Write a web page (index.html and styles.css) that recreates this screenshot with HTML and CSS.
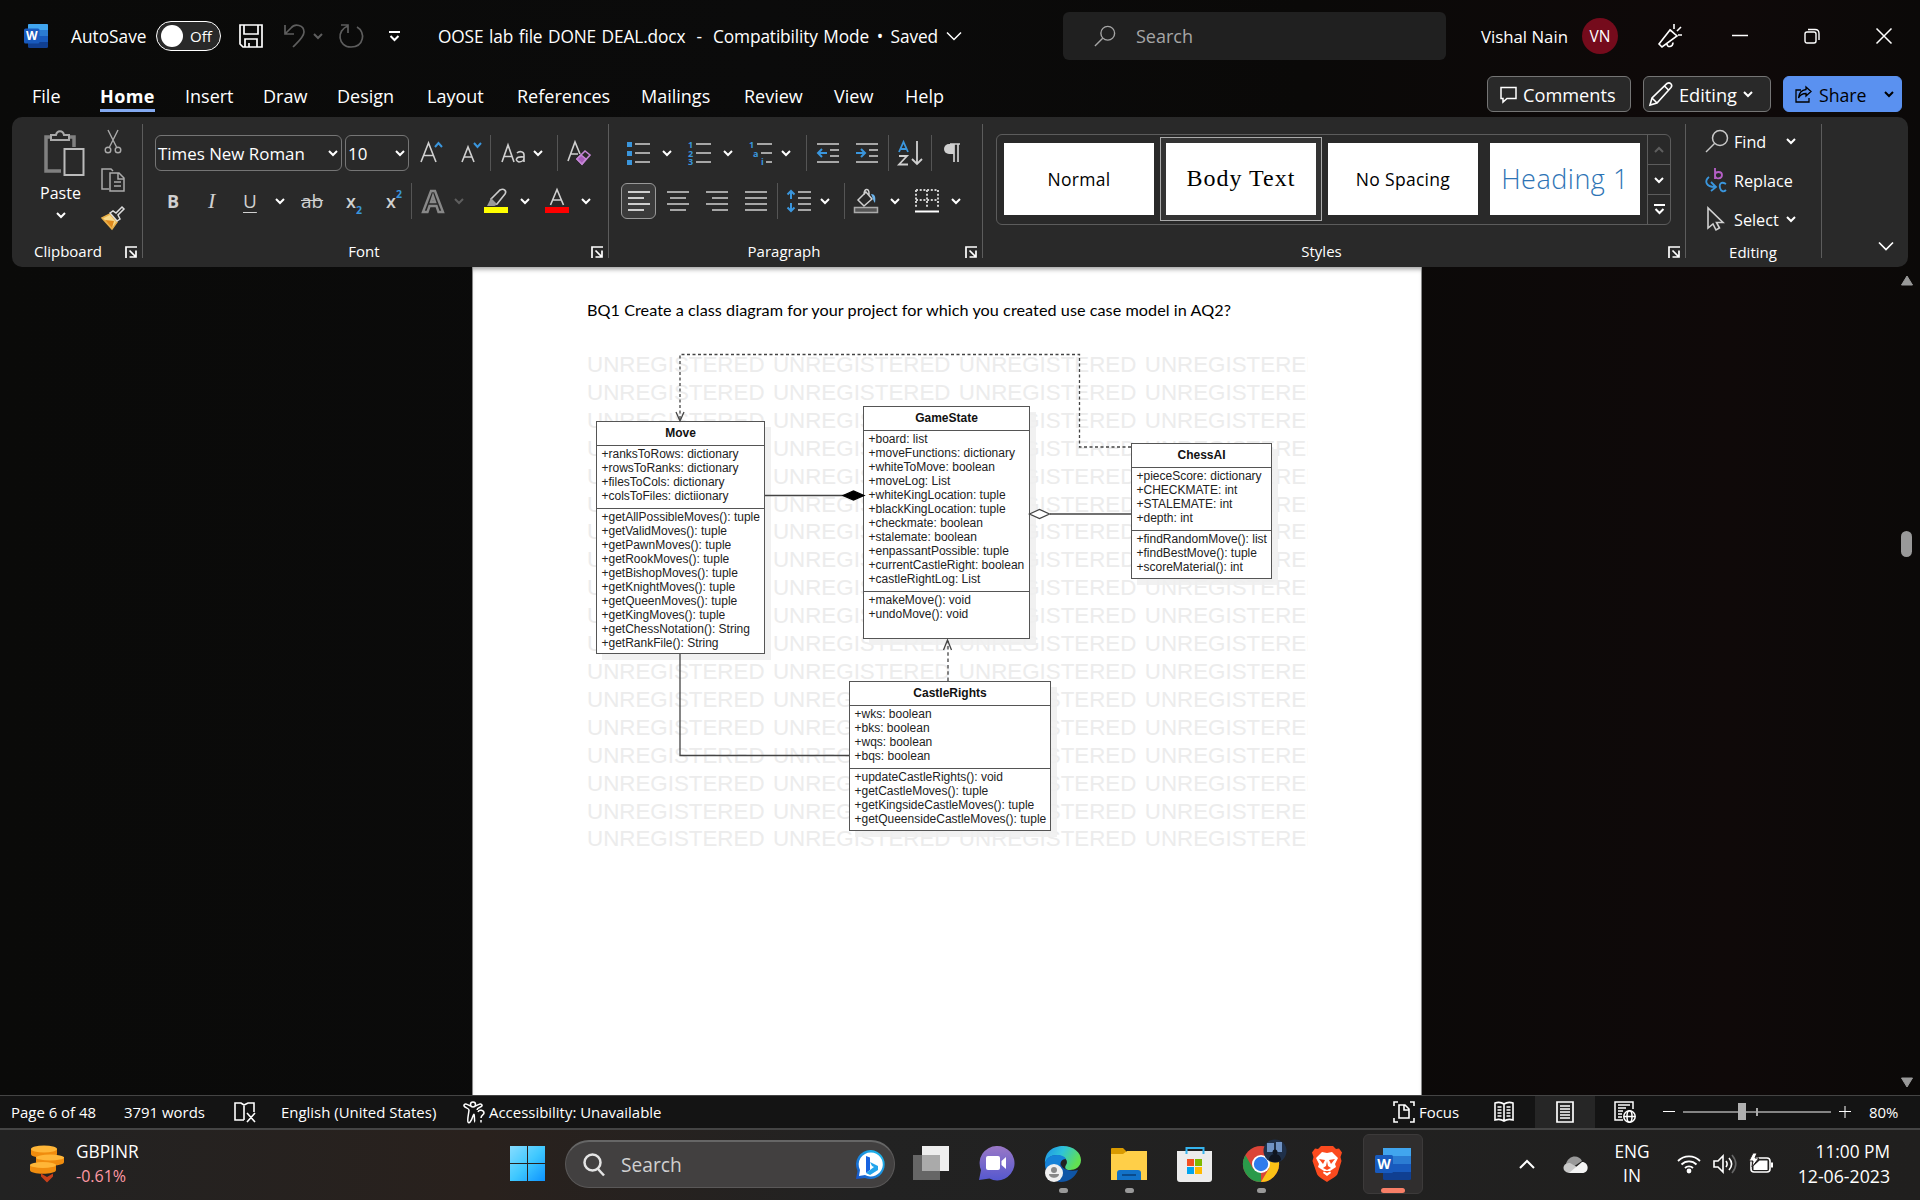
FILE: index.html
```
<!DOCTYPE html>
<html lang="en">
<head>
<meta charset="utf-8">
<title>OOSE lab file DONE DEAL.docx - Word</title>
<link rel="stylesheet" href="styles.css">
</head>
<body>
<svg class="defs" width="0" height="0" aria-hidden="true">
  <defs>
    <symbol id="chev" viewBox="0 0 10 10"><path d="M1 3l4 4 4-4" fill="none" stroke="currentColor" stroke-width="2"/></symbol>
    <symbol id="launch" viewBox="0 0 12 12"><path d="M1 12V1h11M4.500 4.500l6 6M11 4.500V11H4.500" fill="none" stroke="currentColor" stroke-width="1.700"/></symbol>
    <symbol id="word" viewBox="0 0 36 36"><rect x="8" y="2" width="28" height="32" rx="1.500" fill="#103f91"/><path d="M8 2h28v8H8z" fill="#41a5ee"/><path d="M8 10h28v8H8z" fill="#2b7cd3"/><path d="M8 18h28v8H8z" fill="#185abd"/><rect x="0" y="9" width="18" height="18" rx="1.500" fill="#185abd"/><text x="9" y="23" text-anchor="middle" font-family="Open Sans, sans-serif" font-weight="700" font-size="14" fill="#fff">W</text></symbol>
    <symbol id="word-title" viewBox="0 0 24 24"><rect x="4" width="20" height="24" rx="1.500" fill="#103f91"/><path d="M4 1q0-1 1-1h18q1 0 1 1v5H4z" fill="#41a5ee"/><path d="M4 6h20v6H4z" fill="#2b7cd3"/><path d="M4 12h20v6H4z" fill="#185abd"/><rect y="4.500" width="15.500" height="15" rx="1.500" fill="#185abd"/><text x="7.700" y="16.300" text-anchor="middle" font-family="Open Sans, sans-serif" font-weight="700" font-size="12" fill="#fff">W</text></symbol>
    <symbol id="glass" viewBox="0 0 24 24"><circle cx="15" cy="9" r="7.500" fill="none" stroke="currentColor" stroke-width="1.500"/><path d="M9.500 14.500L1 23" stroke="currentColor" stroke-width="1.500"/></symbol>
  </defs>
</svg>

<header class="titlebar">
  <svg class="i24"><use href="#word-title"/></svg>
  <span class="t17">AutoSave</span>
  <span class="toggle"><i></i>Off</span>
  <svg class="i24" viewBox="0 0 24 24" fill="none" stroke="#fff" stroke-width="1.700"><path d="M1 1h22v22H4l-3-3zM5 1v9h14V1M6 23v-8h12v8M10 23v-4"/></svg>
  <svg class="i24 dim" viewBox="0 0 24 24" fill="none" stroke="currentColor" stroke-width="1.700"><path d="M2 1v9h9M2 10l6-6c4-5 13-3 13 4 0 5-6 10-11 15"/></svg>
  <svg class="chev dim"><use href="#chev"/></svg>
  <svg class="i24 dim" viewBox="0 0 24 24" fill="none" stroke="currentColor" stroke-width="1.700"><path d="M2 1h7v8M9 2C-3 6-1 23 12 23s15-15 6-20"/></svg>
  <svg class="qat" viewBox="0 0 11 11"><path d="M0 1h11M1.500 5l4 4 4-4" fill="none" stroke="#fff" stroke-width="2"/></svg>
  <span class="t17 doc-name">OOSE lab file DONE DEAL.docx&nbsp; -&nbsp; Compatibility Mode <b>•</b> Saved</span>
  <svg class="chev16" viewBox="0 0 16 16"><path d="M1 4.500l7 7 7-7" fill="none" stroke="#fff" stroke-width="1.500"/></svg>
  <div class="search"><svg class="i22"><use href="#glass"/></svg><span>Search</span></div>
  <span class="t17 user">Vishal Nain</span>
  <span class="avatar">VN</span>
  <svg class="i24" viewBox="0 0 24 24" fill="none" stroke="#fff" stroke-width="1.600"><path d="M1 20L12 6l7 6L4 23zM12 5.500l7.500 7M9 20c0 4 6 3 6-1.500M16 5V0M19 7l4-4M20 11h4"/></svg>
  <svg class="i16" viewBox="0 0 16 16"><path d="M0 7.500h16" stroke="#fff" stroke-width="1.500"/></svg>
  <svg class="i16" viewBox="0 0 16 16" fill="none" stroke="#fff" stroke-width="1.400"><rect x="1" y="4" width="11" height="11" rx="2"/><path d="M4 1.500h7c2.500 0 4 1.500 4 4V12"/></svg>
  <svg class="i16" viewBox="0 0 16 16"><path d="M0.500 0.500l15 15M15.500 0.500l-15 15" stroke="#fff" stroke-width="1.500"/></svg>
</header>

<nav class="tabs">
  <div class="tab-list">
    <span>File</span><span class="on">Home</span><span>Insert</span><span>Draw</span><span>Design</span><span>Layout</span><span>References</span><span>Mailings</span><span>Review</span><span>View</span><span>Help</span>
  </div>
  <div class="actions">
    <div class="btn comments"><svg class="i17" viewBox="0 0 17 17"><path d="M1 1.500h15v11H7l-4 3.500v-3.500H1z" fill="none" stroke="#fff" stroke-width="1.500"/></svg><span>Comments</span></div>
    <div class="btn editing"><svg class="i24" viewBox="0 0 24 24"><path d="M1 23l2-7L18 1.500c3-2 6 1.500 4 4L8 21zM15.500 4l4.500 4.500M3 16l5 5" fill="none" stroke="#fff" stroke-width="1.600"/></svg><span>Editing</span><svg class="chev"><use href="#chev"/></svg></div>
    <div class="btn share"><svg class="i17" viewBox="0 0 17 17"><path d="M6 4H1v12h13v-4M11 1l5 4.500-5 4.500V7.500C7 7.500 5 9 3.500 12 4 7 7 4 11 3.500z" fill="none" stroke="#000" stroke-width="1.300"/></svg><span>Share</span><svg class="chev"><use href="#chev"/></svg></div>
  </div>
</nav>

<section class="ribbon">
  <div class="group clipboard">
    <div class="clip-body">
      <div class="paste">
        <svg width="42" height="46" viewBox="0 0 42 46" fill="none" stroke="#999" stroke-width="2"><path d="M8 7H3v34h15M26 7h5v10" stroke-width="3.500" stroke="#808080"/><path d="M8 10V5h5c1-5 7-5 8 0h5v5z" stroke="#aaa" fill="#292929"/><path d="M21.500 19h19v26h-19z" stroke="#bbb" fill="#292929"/></svg>
        <span>Paste</span><svg class="chev"><use href="#chev"/></svg>
      </div>
      <div class="clip-icons">
        <svg class="i24" viewBox="0 0 24 24" fill="none" stroke="#aaa" stroke-width="1.400"><path d="M7 0l8.500 17M17 0L8.500 17"/><circle cx="7" cy="20" r="2.800"/><circle cx="17" cy="20" r="2.800"/></svg>
        <svg class="i24" viewBox="0 0 24 24" fill="none" stroke="#aaa" stroke-width="1.500"><path d="M8 21H1V1h9l2 2M9 5h9l5 5v13H9zM17 5v6h6M13 14h7M13 18h7"/></svg>
        <svg class="i24" viewBox="0 0 24 24" fill="none" stroke-width="1.500"><path d="M1 12l8-4 7 8-5 7z" fill="#f7d98a" stroke="#e8b04a"/><path d="M4 14l9 1-2 7z" fill="#e08a1c"/><path d="M9 7l3-2 3 2 6-6 2 2-6 6 2 4-3 2z" fill="#292929" stroke="#ddd"/></svg>
      </div>
    </div>
    <footer><span>Clipboard</span><svg class="launch"><use href="#launch"/></svg></footer>
  </div>

  <div class="group font">
    <div class="row font-top">
      <div class="combo">Times New Roman<svg class="chev"><use href="#chev"/></svg></div>
      <div class="combo">10<svg class="chev"><use href="#chev"/></svg></div>
      <svg width="24" height="24" viewBox="0 0 24 24" fill="none" stroke="#d0d0d0" stroke-width="1.600"><path d="M1 21L8.500 2 16 21M3.500 14.500h10"/><path d="M15 6l3.500-4L22 6" stroke="#3a96dd" stroke-width="2"/></svg>
      <svg width="24" height="24" viewBox="0 0 24 24" fill="none" stroke="#d0d0d0" stroke-width="1.600"><path d="M1 21L7 6l6 15M3 16h8"/><path d="M13 2l3.500 4L20 2" stroke="#3a96dd" stroke-width="2"/></svg>
      <b class="sep"></b>
      <svg width="26" height="24" viewBox="0 0 26 24" fill="none" stroke="#d0d0d0" stroke-width="1.600"><path d="M1 21L7 4l6 17M3 15.500h8M16 12c2-2 7-2 7 2v7m0-5c-9-1-9 4-5 5 3 0 5-2 5-4"/></svg>
      <svg class="chev"><use href="#chev"/></svg>
      <b class="sep"></b>
      <svg width="24" height="24" viewBox="0 0 24 24" fill="none" stroke="#d0d0d0" stroke-width="1.600"><path d="M1 20L8 1l5 12M3 13h8"/><path d="M10 18l8-8 5 4-8 9z" stroke="#c586d6"/><path d="M10 18l4-4 5 4-4 5z" fill="#a85cba" stroke="#c586d6"/></svg>
    </div>
    <div class="row font-bottom">
      <span class="g-b">B</span><span class="g-i">I</span><span class="g-u">U</span>
      <svg class="chev"><use href="#chev"/></svg>
      <span class="g-s">ab</span>
      <span class="g-x">x<sub>2</sub></span><span class="g-x">x<sup>2</sup></span>
      <b class="sep"></b>
      <svg class="i24" viewBox="0 0 24 24"><path d="M2 23L10 2h4l8 21h-4.500l-2-6h-7l-2 6zM10 13h4l-2-6z" fill="#292929" stroke="#888" stroke-width="2.400"/></svg>
      <svg class="chev dim"><use href="#chev"/></svg>
      <svg class="i24" viewBox="0 0 24 24"><path d="M7 10l9-9c4-2 7 1 5 4l-8 10-4 1z" fill="none" stroke="#ccc" stroke-width="1.600"/><path d="M7 9l6 6-3 2H3z" fill="#999"/><path d="M0 18h24v6H0z" fill="#ff0"/></svg>
      <svg class="chev"><use href="#chev"/></svg>
      <svg class="i24" viewBox="0 0 24 24"><path d="M5.500 16L12 0.500 18.500 16M8 11h8" fill="none" stroke="#d0d0d0" stroke-width="1.600"/><path d="M0 18h24v6H0z" fill="red"/></svg>
      <svg class="chev"><use href="#chev"/></svg>
    </div>
    <footer><span>Font</span><svg class="launch"><use href="#launch"/></svg></footer>
  </div>

  <div class="group para">
    <div class="row para-top">
      <svg class="i24" viewBox="0 0 24 24"><path d="M0 1h5v5H0zM0 10h5v5H0zM0 19h5v5H0z" fill="#3a96dd"/><path d="M8 3h15M8 12h15M8 21h15" stroke="#d0d0d0" stroke-width="1.700"/></svg>
      <svg class="chev"><use href="#chev"/></svg>
      <svg class="i24" viewBox="0 0 24 24"><g font-family="Open Sans, sans-serif" font-size="9" font-weight="700" fill="#3a96dd"><text x="0" y="7">1</text><text x="0" y="15.500">2</text><text x="0" y="24">3</text></g><path d="M8 3h15M8 12h15M8 21h15" stroke="#d0d0d0" stroke-width="1.700"/></svg>
      <svg class="chev"><use href="#chev"/></svg>
      <svg class="i24" viewBox="0 0 24 24"><g font-family="Open Sans, sans-serif" font-size="9" font-weight="700" fill="#3a96dd"><text x="0" y="7">1</text><text x="4" y="15.500">a</text><text x="12" y="24">i</text></g><path d="M8 3h15M12 12h11M17 21h6" stroke="#d0d0d0" stroke-width="1.700"/></svg>
      <svg class="chev"><use href="#chev"/></svg>
      <b class="sep"></b>
      <svg class="i24" viewBox="0 0 24 24" fill="none" stroke="#d0d0d0" stroke-width="1.700"><path d="M0 3h22M13 9h9M13 15h9M0 21h22"/><path d="M1 12h9M5 8l-4 4 4 4" stroke="#3a96dd" stroke-width="2"/></svg>
      <svg class="i24" viewBox="0 0 24 24" fill="none" stroke="#d0d0d0" stroke-width="1.700"><path d="M0 3h22M13 9h9M13 15h9M0 21h22"/><path d="M0 12h9M5 8l4 4-4 4" stroke="#3a96dd" stroke-width="2"/></svg>
      <b class="sep"></b>
      <svg class="i24" viewBox="0 0 24 24" fill="none" stroke="#d0d0d0" stroke-width="1.800"><path d="M1 11L5.500 1 10 11M3 8h5" stroke="#3a96dd"/><path d="M1 15h8L1 23.500h9M19 0v23M14 18l5 5 5-5"/></svg>
      <b class="sep"></b>
      <svg class="i24" viewBox="0 0 24 24"><path d="M7 3h10M11 3v18M15 3v18" fill="none" stroke="#d0d0d0" stroke-width="1.700"/><path d="M11 3H6a5 5 0 000 10h5z" fill="#d0d0d0"/></svg>
    </div>
    <div class="row para-bottom">
      <span class="picked"><svg width="22" height="22" viewBox="0 0 22 22"><path d="M0 2h22M0 8h16M0 14h22M0 20h16" stroke="#fff" stroke-width="1.700"/></svg></span>
      <svg width="22" height="22" viewBox="0 0 22 22"><path d="M0 2h22M3 8h16M0 14h22M3 20h16" stroke="#d0d0d0" stroke-width="1.700"/></svg>
      <svg width="22" height="22" viewBox="0 0 22 22"><path d="M0 2h22M6 8h16M0 14h22M6 20h16" stroke="#d0d0d0" stroke-width="1.700"/></svg>
      <svg width="22" height="22" viewBox="0 0 22 22"><path d="M0 2h22M0 8h22M0 14h22M0 20h22" stroke="#d0d0d0" stroke-width="1.700"/></svg>
      <b class="sep"></b>
      <svg class="i24" viewBox="0 0 24 24" fill="none" stroke="#d0d0d0" stroke-width="1.700"><path d="M11 3h13M11 9h13M11 15h13M11 21h13"/><path d="M4 2v8M4 14v8M0.500 5.500L4 2l3.500 3.500M0.500 18.500L4 22l3.500-3.500" stroke="#3a96dd" stroke-width="2"/></svg>
      <svg class="chev"><use href="#chev"/></svg>
      <b class="sep"></b>
      <svg class="i24" viewBox="0 0 24 24" fill="none" stroke="#d0d0d0" stroke-width="1.500"><path d="M4 11l8-8 6 7-8 7zM10 6c0-7 5-7 5-2v3"/><path d="M17 5c4 0 5 3 4 9-2-2-2-5-4-9z" fill="#6cb3ea" stroke="none"/><path d="M0.500 18.500h23v5H.500z" fill="#555" stroke="#aaa"/></svg>
      <svg class="chev"><use href="#chev"/></svg>
      <svg class="i24" viewBox="0 0 24 24" fill="none" stroke="#d0d0d0" stroke-width="2"><path d="M1 1h22M1 1v18M23 1v18M12 1v18M1 11h22" stroke-dasharray="2 1.700"/><path d="M0 22.500h24" stroke="#fff"/></svg>
      <svg class="chev"><use href="#chev"/></svg>
    </div>
    <footer><span>Paragraph</span><svg class="launch"><use href="#launch"/></svg></footer>
  </div>

  <div class="group styles">
    <div class="gallery">
      <div class="card s-normal"><span>Normal</span></div>
      <div class="card s-body sel"><span>Body Text</span></div>
      <div class="card s-nosp"><span>No Spacing</span></div>
      <div class="card s-head"><span>Heading 1</span></div>
      <div class="scroller">
        <span><svg class="chev dim up"><use href="#chev"/></svg></span>
        <span><svg class="chev"><use href="#chev"/></svg></span>
        <span><svg class="qat" viewBox="0 0 11 11"><path d="M0 1h11M1.500 5l4 4 4-4" fill="none" stroke="#fff" stroke-width="2"/></svg></span>
      </div>
    </div>
    <footer><span>Styles</span><svg class="launch"><use href="#launch"/></svg></footer>
  </div>

  <div class="group edit">
    <div class="edit-row"><svg class="i24 soft"><use href="#glass"/></svg><span>Find</span><svg class="chev"><use href="#chev"/></svg></div>
    <div class="edit-row"><svg class="i24" viewBox="0 0 24 24" fill="none" stroke-width="1.800"><path d="M10 0v11M10 7c0-4 7-4 7 0s-7 5-7 0" stroke="#b65fc7"/><path d="M21 16c-5-3-7 0-6 4 1 4 4 4 6 2M4 9c-5 4-3 10 6 10M6 14l5 5-5 4" stroke="#3a96dd"/></svg><span>Replace</span></div>
    <div class="edit-row"><svg class="i24" viewBox="0 0 24 24"><path d="M3 1v20l5-4 3 6 3.500-2-3-5.500H18z" fill="none" stroke="#d0d0d0" stroke-width="1.600"/></svg><span>Select</span><svg class="chev"><use href="#chev"/></svg></div>
    <footer><span>Editing</span></footer>
  </div>
  <div class="collapse"><svg class="chev16" viewBox="0 0 16 16"><path d="M1 4.500l7 7 7-7" fill="none" stroke="#fff" stroke-width="1.700"/></svg></div>
</section>

<main class="workspace">
  <article class="page">
    <p class="question">BQ1 Create a class diagram for your project for which you created use case model in AQ2?</p>
    <div class="diagram">
      <div class="watermark" id="watermark"></div>
      <div class="uml move"><h2>Move</h2><ul><li>+ranksToRows: dictionary<li>+rowsToRanks: dictionary<li>+filesToCols: dictionary<li>+colsToFiles: dictiionary</ul><ul><li>+getAllPossibleMoves(): tuple<li>+getValidMoves(): tuple<li>+getPawnMoves(): tuple<li>+getRookMoves(): tuple<li>+getBishopMoves(): tuple<li>+getKnightMoves(): tuple<li>+getQueenMoves(): tuple<li>+getKingMoves(): tuple<li>+getChessNotation(): String<li>+getRankFile(): String</ul></div>
      <div class="uml game"><h2>GameState</h2><ul><li>+board: list<li>+moveFunctions: dictionary<li>+whiteToMove: boolean<li>+moveLog: List<li>+whiteKingLocation: tuple<li>+blackKingLocation: tuple<li>+checkmate: boolean<li>+stalemate: boolean<li>+enpassantPossible: tuple<li>+currentCastleRight: boolean<li>+castleRightLog: List</ul><ul><li>+makeMove(): void<li>+undoMove(): void</ul></div>
      <div class="uml chess"><h2>ChessAI</h2><ul><li>+pieceScore: dictionary<li>+CHECKMATE: int<li>+STALEMATE: int<li>+depth: int</ul><ul><li>+findRandomMove(): list<li>+findBestMove(): tuple<li>+scoreMaterial(): int</ul></div>
      <div class="uml castle"><h2>CastleRights</h2><ul><li>+wks: boolean<li>+bks: boolean<li>+wqs: boolean<li>+bqs: boolean</ul><ul><li>+updateCastleRights(): void<li>+getCastleMoves(): tuple<li>+getKingsideCastleMoves(): tuple<li>+getQueensideCastleMoves(): tuple</ul></div>
      <svg class="links" width="722" height="510" viewBox="586 345 722 510" fill="none" stroke="#444" stroke-width="1.300">
        <path d="M1131 447H1079.500V354.500H680V420" stroke-dasharray="3 2.500"/>
        <path d="M676 412l4 9 4-9"/>
        <path d="M765 495.500H845M1050 514h81M680 654v101.500H849"/>
        <path d="M843 495.500l10.500-4.500 10.500 4.500-10.500 4.500z" fill="#000" stroke="#000"/>
        <path d="M1029.500 514l10-4.500 10 4.500-10 4.500z" fill="#fff"/>
        <path d="M948 681V641" stroke-dasharray="3.500 2.800"/>
        <path d="M943.500 650l4-10 4 10"/>
      </svg>
    </div>
  </article>
  <div class="vscroll">
    <svg width="14" height="11" viewBox="0 0 14 11"><path d="M7 1l5.500 9h-11z" fill="#999" stroke="#999" stroke-linejoin="round"/></svg>
    <i></i>
    <svg width="14" height="11" viewBox="0 0 14 11"><path d="M7 10l5.500-9h-11z" fill="#999" stroke="#999" stroke-linejoin="round"/></svg>
  </div>
</main>

<div class="status">
  <span>Page 6 of 48</span><span>3791 words</span>
  <svg width="22" height="22" viewBox="0 0 22 22" fill="none" stroke="#fff" stroke-width="1.600"><path d="M10 19H1V2h6l3 2 4-2h6v9M10 4v15M13 12l8 9M21 12l-8 9"/></svg>
  <span>English (United States)</span>
  <svg width="22" height="22" viewBox="0 0 22 22" fill="none" stroke="#fff" stroke-width="1.500"><circle cx="10" cy="3.500" r="2.500"/><path d="M7.500 5C5 4 2 1.500 1 4s5 3 5 5-2 10-1 12 3 0 5-6 1 6 2 6M12.500 5C15 4 18 1.500 19 4s-5 2-5 5M15 11c1-3 6-2 6 1 0 2-3 2-3 5M18 19v2.500"/></svg>
  <span>Accessibility: Unavailable</span>
  <svg width="22" height="22" viewBox="0 0 22 22" fill="none" stroke="#fff" stroke-width="1.600"><path d="M1 5V1h4M17 1h4v4M1 17v4h4M17 21h4v-4M6 4h6l4 4v9H6zM11 4v5h5"/></svg>
  <span>Focus</span>
  <svg width="20" height="22" viewBox="0 0 20 22" fill="none" stroke="#fff" stroke-width="1.600"><path d="M10 3C7 1 4 1 1 2v17c3-1 6-1 9 1 3-2 6-2 9-1V2c-3-1-6-1-9 1zv17M3.500 6h4M3.500 9h4M3.500 12h4M3.500 15h4M12.500 6h4M12.500 9h4M12.500 12h4M12.500 15h4"/></svg>
  <div class="view-on"><svg width="18" height="22" viewBox="0 0 18 22" fill="none" stroke="#fff" stroke-width="1.700"><path d="M1 1h16v20H1zM4 5h10M4 8h10M4 11h10M4 14h10M4 17h10"/></svg></div>
  <svg width="22" height="22" viewBox="0 0 22 22" fill="none" stroke="#fff" stroke-width="1.500"><path d="M9 19H1V1h18v7M4 4h12M4 7h8M4 10h5M4 13h4M4 16h4"/><circle cx="15.500" cy="15.500" r="5.700"/><ellipse cx="15.500" cy="15.500" rx="2.500" ry="5.700"/><path d="M10 15.500h11"/></svg>
  <svg width="12" height="12" viewBox="0 0 12 12"><path d="M0 5.500h12" stroke="#fff"/></svg>
  <svg width="148" height="18" viewBox="0 0 148 18"><path d="M0 9h148" stroke="#aaa" stroke-width="1.600"/><path d="M74 5v8" stroke="#aaa" stroke-width="2"/><rect x="55" width="8" height="17" fill="#b0b0b0"/></svg>
  <svg width="12" height="12" viewBox="0 0 12 12"><path d="M0 5.500h12M6 0v12" stroke="#fff"/></svg>
  <span>80%</span>
</div>

<footer class="taskbar">
  <svg width="36" height="38" viewBox="0 0 36 38"><g fill="#f08c0e"><path d="M0 20h26v5c0 5-26 5-26 0zM6 12h28v5c0 5-28 5-28 0zM1 4h26v5c0 5-26 5-26 0z"/></g><g fill="#ffb638"><ellipse cx="13" cy="20" rx="13" ry="3"/><ellipse cx="20" cy="12.500" rx="14" ry="3"/><ellipse cx="14" cy="4" rx="13" ry="3.500"/></g><path d="M11 28.500l6 3.500 6-3.500v3l-6 6-6-6z" fill="#c8401a"/></svg>
  <div class="ticker"><span>GBPINR</span><span class="down">-0.61%</span></div>
  <svg width="36" height="36" viewBox="0 0 36 36"><defs><linearGradient id="win" x1="0" y1="0" x2="36" y2="36" gradientUnits="userSpaceOnUse"><stop offset="0" stop-color="#87dcff"/><stop offset=".5" stop-color="#3fc8ff"/><stop offset="1" stop-color="#0a90ff"/></linearGradient></defs><path d="M0 0h17v17H0zM18 0h17v17H18zM0 18h17v17H0zM18 18h17v17H18z" fill="url(#win)"/></svg>
  <div class="tb-search">
    <svg width="22" height="24" viewBox="0 0 22 24" fill="none" stroke="#e4e4e4" stroke-width="2.500"><circle cx="9.500" cy="9.500" r="8"/><path d="M15 16l6 6.500"/></svg>
    <span>Search</span>
    <svg width="30" height="30" viewBox="0 0 30 30"><defs><linearGradient id="bing" x1="1" y1="0" x2="0" y2="1"><stop offset="0" stop-color="#1fc6f0"/><stop offset="1" stop-color="#1650c8"/></linearGradient></defs><path d="M15 0a14.500 14.500 0 11-6 28l-9 1 1.500-8A14.500 14.500 0 0115 0z" fill="url(#bing)"/><path d="M15 2.500a12 12 0 11-6 22.500l-6 1 1-6A12 12 0 0115 2.500z" fill="#fff"/><path d="M10 6l4 1.500V20l-4 3z" fill="#1763e0"/><path d="M10 23l4 2 8-5v-4l-8-4 2 4 2 1z" fill="#23a5ec"/></svg>
  </div>
  <svg width="36" height="36" viewBox="0 0 36 36"><path d="M9 0h27v25H9z" fill="#eee"/><path d="M0 9h27v25H0z" fill="#666"/><path d="M9 9h18v16H9z" fill="#aaa"/></svg>
  <svg width="36" height="36" viewBox="0 0 36 36"><defs><linearGradient id="chat" x1="0" y1="0" x2="0" y2="1"><stop offset="0" stop-color="#9a78c6"/><stop offset="1" stop-color="#5558cf"/></linearGradient></defs><path d="M17.500 0a17.200 17.200 0 11-7 32.500L0 34l2-10A17.200 17.200 0 0117.500 0z" fill="url(#chat)"/><rect x="7" y="10" width="14" height="14" rx="2" fill="#fff"/><path d="M22.500 15l4.500-4v12l-4.500-4z" fill="#fff"/></svg>
  <div class="app run"><svg width="36" height="36" viewBox="0 0 36 36"><defs><linearGradient id="edge" x1="0" y1="0" x2="1" y2=".4"><stop offset="0" stop-color="#1b8fe8"/><stop offset=".5" stop-color="#2fc3d8"/><stop offset="1" stop-color="#62e052"/></linearGradient></defs><path d="M1 13C4 7 14 6 19 10c-5 2-5 10 1 13 4 2 9 2 13 1-3 8-10 12-17 12C5 35-1 25 1 13z" fill="#0f55a6"/><path d="M0 18C-1 6 8 0 18 0c11 0 18 7 18 14 0 7-6 10-11 10-4 0-6-2-4-5 3-4-1-9-9-10C6 9 1 12 0 18z" fill="url(#edge)"/><path d="M0 18c1-6 6-9 12-9 5 0 8 2 9 4-5 0-7 5-6 10l-8 8C2 28 0 23 0 18z" fill="#1682d8"/><circle cx="9" cy="27" r="9" fill="#f0f0f0"/><circle cx="9" cy="24" r="3" fill="#888"/><path d="M4 28h10c0 5-10 5-10 0z" fill="#888"/></svg></div>
  <div class="app run"><svg width="36" height="36" viewBox="0 0 36 36"><path d="M0 3q0-1 1-1h11l3 3v5H0z" fill="#d99a00"/><path d="M0 8h12l4-3h20v29H0z" fill="#ffcf48"/><path d="M6 34v-7q0-3 3-3h18q3 0 3 3v7z" fill="#1272c8"/><path d="M11 29h14" stroke="#0a4b8c" stroke-width="2"/></svg></div>
  <div class="app"><svg width="36" height="36" viewBox="0 0 36 36"><path d="M0 5h35v28q0 3-3 3H3q-3 0-3-3z" fill="#ececec"/><path d="M9.500 8V2h17v6" fill="none" stroke="#35b4ee" stroke-width="2"/><path d="M10 13h7v7h-7z" fill="#f25022"/><path d="M18 13h7v7h-7z" fill="#7fba00"/><path d="M10 21h7v7h-7z" fill="#00a4ef"/><path d="M18 21h7v7h-7z" fill="#ffb900"/></svg></div>
  <div class="app run"><svg width="36" height="36" viewBox="0 0 36 36"><circle cx="18" cy="18" r="18" fill="#db4437"/><path d="M18 36A18 18 0 012.400 9L10 22.500 18 27z" fill="#2a9a4a"/><path d="M18 36l8-13.500V9h7.600A18 18 0 0118 36z" fill="#fbc116"/><circle cx="18" cy="18" r="9" fill="#fff"/><circle cx="18" cy="18" r="7.200" fill="#2f7bed"/><circle cx="32" cy="5" r="11.500" fill="#1f3049"/><path d="M24-3h7v9h-7zM33-4h6V6h-6z" fill="#6f93c4"/><circle cx="32" cy="6" r="2.500" fill="#10151f"/><path d="M26 14c0-8 12-8 12 0-4 3-8 3-12 0z" fill="#10151f"/></svg></div>
  <div class="app"><svg width="30" height="36" viewBox="0 0 30 36"><path d="M9 0h12l3 3 3-.5 3 4-1.500 4.500 1 4-4 13c-1 3-7 5-10.500 8C11 33 6 31 5 28L.500 15l1-4L0 6.500l3-4 3 .5z" fill="#fb4a1e"/><path d="M10 6l5 1 5-1 6 6-3 6 1 3-6 4 1 2-4 3-4-3 1-2-6-4 1-3-3-6z" fill="#fff"/><path d="M7 13l6 1-2 4zM23 13l-6 1 2 4zM15 15l1 5 3 2-4 2-4-2 3-2zM11 25l4 2 4-2-4 0z" fill="#fb4a1e"/></svg></div>
  <div class="tile run"><svg width="36" height="36"><use href="#word"/></svg></div>
  <svg width="16" height="12" viewBox="0 0 16 12"><path d="M1 10l7-7 7 7" fill="none" stroke="#fff" stroke-width="2"/></svg>
  <svg width="25" height="17" viewBox="0 0 25 17"><path d="M3 8C5-1 16-2 19 5l-9 6z" fill="#999"/><path d="M6 17C-2 16-1 6 7 7l14 8z" fill="#c8c8c8"/><path d="M6 17L19 6c7 0 8 11 0 11z" fill="#f4f4f4"/></svg>
  <div class="lang"><span>ENG</span><span>IN</span></div>
  <svg width="24" height="20" viewBox="0 0 24 20" fill="none" stroke="#fff" stroke-width="1.800"><path d="M1 7a15.500 15.500 0 0122 0M4.500 10.500a10.500 10.500 0 0115 0M8 14a5.700 5.700 0 018 0"/><circle cx="12" cy="17" r="1.500" fill="#fff"/></svg>
  <svg width="24" height="22" viewBox="0 0 24 22" fill="none" stroke="#fff" stroke-width="1.600"><path d="M1 8h4l5-5v16l-5-5H1zM13 8c1.500 2 1.500 4 0 6M16 5c3.500 4 3.500 8 0 12"/><path d="M19 2c5 6 5 12 0 18" stroke="#666"/></svg>
  <svg width="24" height="22" viewBox="0 0 24 22"><rect x="2" y="5" width="19" height="14" rx="3" fill="none" stroke="#fff" stroke-width="1.600"/><path d="M4.500 17v-4l6-5.500h8V17zM22 9.500h2v5h-2z" fill="#fff"/><path d="M4 0L0 8h4l-1 6 7-9H6l2-5z" fill="#fff" stroke="#231f1e"/></svg>
  <div class="clock"><span>11:00 PM</span><span class="date">12-06-2023</span></div>
</footer>
<script src="watermark.js"></script>
</body>
</html>
```
FILE: styles.css
```
* { box-sizing: border-box; }
body {
  margin: 0; width: 1920px; height: 1200px; overflow: hidden;
  display: flex; flex-direction: column;
  background: linear-gradient(90deg, #0a0a09, #0b0b0b 40%, #0a0908 68%, #0f0909 90%, #0b0908);
  color: #fff; font-family: "Open Sans", "Noto Sans", sans-serif; font-size: 16px; white-space: nowrap;
}
svg { display: block; overflow: visible; flex: none; }
.defs { position: absolute; }
.i24 { width: 24px; height: 24px; }
.i22 { width: 22px; height: 22px; }
.i17 { width: 17px; height: 17px; }
.i16 { width: 16px; height: 16px; }
.chev { width: 10px; height: 10px; }
.chev16 { width: 16px; height: 16px; }
.qat { width: 11px; height: 11px; }
.launch { width: 12px; height: 12px; }
.dim { color: #5e5e5e; }
.soft { color: #c8c8c8; }

/* title bar */
.titlebar {
  height: 72px; flex: none; display: grid; align-items: center; padding-left: 24px;
  grid-template-columns: 47px 85px 83px 44px 30px 26px 50px 49px 508px 117px 418px 101px 76px 74px 72px 72px 30px;
}
.t17 { font-size: 17.300px; }
.doc-name { word-spacing: 1.200px; letter-spacing: -.13px; }
.doc-name b { font-weight: 400; margin: 0 2px; }
.toggle { width: 65px; height: 30px; border: 1.500px solid #fff; border-radius: 15px; background: #292929; display: flex; align-items: center; gap: 7px; padding-left: 4px; font-size: 15px; }
.toggle i { width: 22px; height: 22px; border-radius: 50%; background: #fff; }
.search { width: 383px; height: 48px; border-radius: 6px; background: #202020; display: flex; align-items: center; gap: 20px; padding-left: 31px; color: #a6a6a6; font-size: 18px; }
.user { font-size: 16.800px; }
.avatar { width: 36px; height: 36px; border-radius: 50%; background: #750b1c; display: flex; align-items: center; justify-content: center; font-size: 15.500px; }

/* tabs */
.tabs { height: 45px; flex: none; display: flex; justify-content: space-between; padding: 4px 18px 0 32px; }
.tab-list { display: grid; grid-template-columns: 68px 85px 78px 74px 90px 90px 124px 103px 90px 71px 60px; font-size: 18px; line-height: 41px; }
.tab-list .on { font-weight: 700; justify-self: start; height: 36px; border-bottom: 3px solid #83a9f0; letter-spacing: .4px; }
.actions { display: flex; gap: 12px; }
.btn { height: 36px; border: 1px solid #757575; border-radius: 6px; background: #292929; display: flex; align-items: center; font-size: 18.200px; }
.btn span { padding-top: 2px; }
.comments { width: 144px; padding-left: 12px; gap: 6px; }
.editing { width: 128px; padding-left: 5px; gap: 6px; }
.share { width: 119px; padding-left: 11px; gap: 7px; background: #5a91f0; border-color: #5a91f0; color: #000; font-size: 17.700px; }
.share .chev { margin-left: 10px; }

/* ribbon */
.ribbon { height: 150px; flex: none; margin: 0 12px; border-radius: 10px; background: #292929; display: flex; padding: 7px 0 9px; position: relative; z-index: 1; }
.group { border-right: 1px solid #5c5c5c; display: flex; flex-direction: column; }
.group footer { height: 16px; margin-top: auto; display: flex; align-items: center; justify-content: center; font-size: 15px; position: relative; }
.group footer span { line-height: 16px; padding-top: 2px; }
.group footer .launch { position: absolute; right: 5px; bottom: 0; }
.clipboard { width: 131px; }
.clipboard footer { padding-right: 18px; }
.clip-body { display: flex; padding: 6px 0 0 27px; gap: 15px; }
.paste { width: 43px; height: 92px; display: flex; flex-direction: column; align-items: center; }
.paste > svg:first-child { margin-left: 7px; }
.paste span { line-height: 22px; margin-top: 6px; }
.paste .chev { margin-top: 6px; }
.clip-icons { display: flex; flex-direction: column; gap: 14px; padding-left: 4px; }
.row { display: grid; align-items: center; height: 36px; }
.sep { width: 1px; height: 36px; background: #555; }
.font { width: 466px; padding-left: 12px; }
.font-top { margin-top: 11px; grid-template-columns: 190px 75px 41px 29px 11px 32px 24px 10px 30px; }
.font-bottom { margin-top: 12px; padding-left: 12px; grid-template-columns: 38px 38px 32px 26px 45px 40px 25px 10px 33px 30px 36px 25px 36px 12px; }
.font footer { padding-right: 35px; }
.combo { height: 36px; border: 1px solid #757575; border-radius: 6px; display: flex; align-items: center; justify-content: space-between; padding: 0 3px 0 2px; font-size: 16.900px; }
.combo:first-child { width: 187px; }
.combo:nth-child(2) { width: 64px; padding-left: 2px; }
.g-b, .g-i, .g-u, .g-s, .g-x { color: #d0d0d0; line-height: 24px; }
.g-b { font-weight: 700; font-size: 18px; }
.g-i { font-family: "Liberation Serif", serif; font-style: italic; font-size: 22px; padding-left: 3px; }
.g-u { font-size: 19px; text-decoration: underline; text-underline-offset: 4px; }
.g-s { font-size: 19px; text-decoration: line-through; }
.g-x { font-size: 18px; font-weight: 600; }
.g-x sub, .g-x sup { color: #3a96dd; font-size: 10.500px; font-weight: 700; line-height: 0; }
.g-x sup { vertical-align: 10px; }
.g-x sub { vertical-align: -6px; }
.para { width: 374px; padding-left: 18px; }
.para-top { margin-top: 11px; grid-template-columns: 35px 26px 35px 26px 32px 25px 11px 39px 32px 10px 33px 12px 24px; }
.para-bottom { margin-top: 12px; margin-left: -6px; grid-template-columns: 46px 39px 39px 32px 10px 33px 24px 10px 36px 25px 36px 10px; }
.picked { width: 35px; height: 36px; border: 1px solid #999; border-radius: 6px; background: #3b3b3b; display: flex; align-items: center; justify-content: center; }
.para footer { padding-right: 41px; }
.styles { width: 703px; padding: 0 0 0 13px; }
.gallery { width: 675px; height: 91px; margin-top: 10px; border: 1px solid #5c5c5c; border-radius: 6px; display: flex; align-items: center; padding: 0 0 2px 1px; }
.card { width: 162px; height: 84px; padding: 5px; border: 1px solid transparent; }
.card span { display: flex; align-items: center; justify-content: center; height: 72px; background: #fff; color: #000; font-family: Lato, "Noto Sans", sans-serif; }
.sel { border-color: #aaa; background: #333; }
.s-normal span { font-size: 18.500px; letter-spacing: 1.200px; }
.s-nosp span { font-size: 18.500px; letter-spacing: .7px; }
.s-normal span, .s-nosp span { font-family: "Open Sans", sans-serif; font-size: 17.500px; letter-spacing: .3px; }
.s-body span { font-family: "Liberation Serif", serif; font-size: 24px; letter-spacing: 1px; }
.s-head span { font-family: "Open Sans", sans-serif; font-size: 27px; font-weight: 300; color: #2e74b5; letter-spacing: .5px; }
.scroller { width: 23px; height: 89px; align-self: flex-start; margin-left: auto; border-left: 1px solid #5c5c5c; display: flex; flex-direction: column; }
.scroller span { flex: 1; display: flex; align-items: center; justify-content: center; }
.scroller span + span { border-top: 1px solid #5c5c5c; }
.up { transform: rotate(180deg); }
.styles footer { padding-right: 38px; }
.styles footer .launch { right: 5px; }
.edit { width: 136px; padding: 0 0 0 19px; }
.edit-row { height: 24px; margin-top: 5px; margin-bottom: 10px; display: flex; align-items: center; font-size: 16.200px; }
.edit-row span { margin-left: 5px; padding-top: 1px; }
.edit-row .chev { margin-left: auto; margin-right: 25px; }
.edit footer { padding-right: 20px; padding-top: 2px; }
.collapse { flex: 1; display: flex; align-items: flex-end; padding: 0 0 4px 56px; }

/* document */
.workspace { flex: 1; display: flex; justify-content: space-between; padding-left: 472px; }
.page { width: 950px; background: #fff; border: solid #888; border-width: 0 1px; color: #000; box-shadow: inset 0 5px 5px -3px #999; }
.question { margin: 0; padding: 31px 0 0 114px; font: 16.200px/23px Lato, "Noto Sans", sans-serif; letter-spacing: .05px; }
.diagram { position: relative; width: 722px; height: 510px; margin: 24px 0 0 113px; font-family: "Liberation Sans", Arial, sans-serif; }
.watermark { width: 722px; height: 510px; overflow: hidden; padding: 6px 0 0 1px; font-size: 22.350px; line-height: 27.900px; word-spacing: 2.200px; color: #ececec; white-space: pre; }
.links { position: absolute; left: 0; top: 0; }
.uml { position: absolute; background: #fff; border: 1.500px solid #555; box-shadow: 6px 6px 0 #efefefe0; font-size: 12px; line-height: 13.920px; color: #222; }
.uml h2 { margin: 0; height: 22.500px; line-height: 22px; font-size: 12px; text-align: center; color: #111; }
.uml ul { list-style: none; margin: 0; padding: 2.800px 0 4px 4.500px; border-top: 1px solid #555; height: 63px; }
.uml ul:last-child { height: auto; }
.move { left: 10px; top: 76px; width: 169px; height: 233px; }
.game { left: 277px; top: 61px; width: 167px; height: 233px; }
.game ul:nth-child(2) { height: 161px; }
.chess { left: 545px; top: 98px; width: 141px; height: 136px; }
.castle { left: 263px; top: 336px; width: 202px; height: 150px; }
.vscroll { width: 27px; display: flex; flex-direction: column; align-items: center; padding: 8px 0 7px; }
.vscroll i { width: 11px; height: 26px; border-radius: 6px; background: #999; margin: 245px 0 auto; }

/* status bar */
.status {
  height: 33px; flex: none; background: #141414; border-top: 1px solid #444; display: grid; align-items: center;
  padding-left: 11px; font-size: 14.950px;
  grid-template-columns: 113px 110px 47px 182px 26px 904px 26px 75px 41px 79px 49px 20px 156px 30px 40px;
}
.view-on { width: 60px; height: 32px; background: #262626; display: flex; align-items: center; justify-content: center; }

/* taskbar */
.taskbar {
  height: 72px; flex: none; border-top: 2px solid #454545; background: linear-gradient(90deg, #222, #29211d 25%, #222 45%, #201f1e);
  display: grid; align-items: center; padding: 0 0 2px 30px; font-size: 17.300px;
  grid-template-columns: 46px 434px 55px 348px 66px 66px 66px 66px 66px 69px 51px 156px 44px 52px 62px 36px 36px 41px 100px;
}
.ticker, .lang, .clock { display: flex; flex-direction: column; line-height: 24px; }
.down { color: #ff99a4; font-size: 16px; }
.lang { align-items: center; width: 34px; }
.clock { align-items: flex-end; width: 100px; }
.date { font-size: 17.700px; }
.tb-search { width: 330px; height: 48px; border-radius: 24px; border: 1px solid #5a5858; border-top: 2px solid #666; background: #424040; display: flex; align-items: center; padding: 0 8px 0 17px; font-size: 19.200px; color: #d0d0d0; }
.tb-search span { margin: 0 auto 0 16px; }
.app, .tile { position: relative; }
.run::after { content: ""; position: absolute; left: 14px; bottom: -11px; width: 9px; height: 5px; border-radius: 3px; background: #999; }
.tile { width: 60px; height: 60px; border: 1px solid #3c3a3a; border-radius: 6px; background: #302e2e; padding: 11px; }
.tile.run::after { left: 17px; bottom: 0; width: 24px; background: #f87f67; }
```
FILE: watermark.js
```
const rows = Array.from({ length: 18 }, () => "UNREGISTERED ".repeat(4));
document.getElementById("watermark").textContent = rows.join("\n");
```
